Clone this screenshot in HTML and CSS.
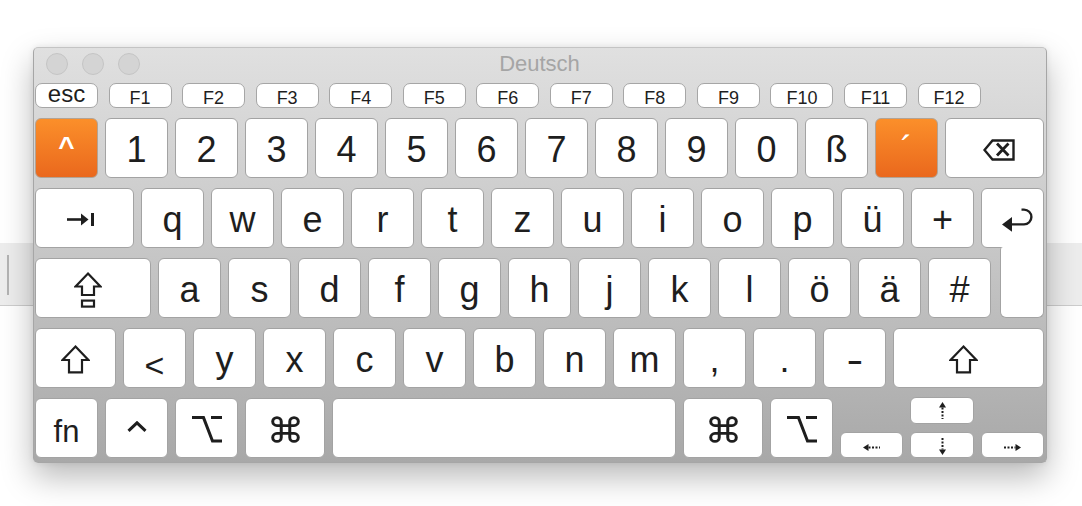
FILE: index.html
```html
<!DOCTYPE html>
<html>
  <head>
    <title>Tastaturübersicht</title>
    <meta charset="UTF-8">
    <link rel="stylesheet" href="styles.css">
  </head>
  <body>
    <!-- Textfeld hinter dem Fenster -->
    <div class="field"><span class="caret"></span></div>

    <div class="viewer">
      <div class="titlebar">
        <div class="lights">
          <span class="light"></span>
          <span class="light"></span>
          <span class="light"></span>
        </div>
        <div class="title">Deutsch</div>
        <div></div>
      </div>

      <div class="frow">
        <div class="fkey esc">esc</div>
        <div class="fkey">F1</div>
        <div class="fkey">F2</div>
        <div class="fkey">F3</div>
        <div class="fkey">F4</div>
        <div class="fkey">F5</div>
        <div class="fkey">F6</div>
        <div class="fkey">F7</div>
        <div class="fkey">F8</div>
        <div class="fkey">F9</div>
        <div class="fkey">F10</div>
        <div class="fkey">F11</div>
        <div class="fkey">F12</div>
      </div>

      <div class="rows">
        <div class="row">
          <div class="key dead hat">^</div>
          <div class="key">1</div>
          <div class="key">2</div>
          <div class="key">3</div>
          <div class="key">4</div>
          <div class="key">5</div>
          <div class="key">6</div>
          <div class="key">7</div>
          <div class="key">8</div>
          <div class="key">9</div>
          <div class="key">0</div>
          <div class="key">ß</div>
          <div class="key dead">´</div>
          <div class="key back">
            <svg class="ico nudge-r" width="32" height="22" viewBox="0 0 32 22">
              <path d="M9.5 1.5H30.5V20.5H9.5L1.5 11Z" fill="none" stroke="#1e1e1e" stroke-width="2.4"/>
              <path d="M14 4.5L25.5 16.5M25.5 4.5L14 16.5" stroke="#1e1e1e" stroke-width="2.8"/>
            </svg>
          </div>
        </div>

        <div class="row">
          <div class="key tab">
            <svg class="ico nudge-l" width="29" height="13" viewBox="0 0 29 13">
              <path d="M0 6.5H16" stroke="#1e1e1e" stroke-width="2.6"/>
              <path d="M14 0.5L21.5 6.5L14 12.5Z" fill="#1e1e1e"/>
              <path d="M25.5 0V13" stroke="#1e1e1e" stroke-width="3"/>
            </svg>
          </div>
          <div class="key">q</div>
          <div class="key">w</div>
          <div class="key">e</div>
          <div class="key">r</div>
          <div class="key">t</div>
          <div class="key">z</div>
          <div class="key">u</div>
          <div class="key">i</div>
          <div class="key">o</div>
          <div class="key">p</div>
          <div class="key">ü</div>
          <div class="key">+</div>
          <div class="key ret">
            <svg class="ico nudge-r" width="31" height="24" viewBox="0 0 31 24">
              <path d="M19.5 1.6H22A7.4 7.4 0 0 1 22 16.4H8" fill="none" stroke="#1e1e1e" stroke-width="2.4"/>
              <path d="M0 16.4L10 9V23.8Z" fill="#1e1e1e"/>
            </svg>
          </div>
        </div>

        <div class="row">
          <div class="key caps">
            <svg class="ico nudge-l2" width="28" height="36" viewBox="0 0 28 36">
              <path d="M14 1.6L26.4 14.5H20V23H8V14.5H1.6Z" fill="none" stroke="#1e1e1e" stroke-width="2.2" stroke-linejoin="miter"/>
              <rect x="8" y="28.6" width="12" height="6" fill="none" stroke="#1e1e1e" stroke-width="2.2"/>
            </svg>
          </div>
          <div class="key">a</div>
          <div class="key">s</div>
          <div class="key">d</div>
          <div class="key">f</div>
          <div class="key">g</div>
          <div class="key">h</div>
          <div class="key">j</div>
          <div class="key">k</div>
          <div class="key">l</div>
          <div class="key">ö</div>
          <div class="key">ä</div>
          <div class="key">#</div>
          <div class="key ret-low"></div>
        </div>

        <div class="row">
          <div class="key lshift">
            <svg class="ico" width="29" height="29" viewBox="0 0 29 29">
              <path d="M14.5 1.6L27.4 15H21V27.4H8V15H1.6Z" fill="none" stroke="#1e1e1e" stroke-width="2.2"/>
            </svg>
          </div>
          <div class="key"><span class="low">&lt;</span></div>
          <div class="key">y</div>
          <div class="key">x</div>
          <div class="key">c</div>
          <div class="key">v</div>
          <div class="key">b</div>
          <div class="key">n</div>
          <div class="key">m</div>
          <div class="key">,</div>
          <div class="key">.</div>
          <div class="key"><span class="wide">-</span></div>
          <div class="key rshift">
            <svg class="ico nudge-l2" width="29" height="29" viewBox="0 0 29 29">
              <path d="M14.5 1.6L27.4 15H21V27.4H8V15H1.6Z" fill="none" stroke="#1e1e1e" stroke-width="2.2"/>
            </svg>
          </div>
        </div>

        <div class="row">
          <div class="key fn">fn</div>
          <div class="key">
            <svg class="ico lift" width="20" height="11" viewBox="0 0 20 11">
              <path d="M1.5 9.8L10 1.8L18.5 9.8" fill="none" stroke="#1e1e1e" stroke-width="3"/>
            </svg>
          </div>
          <div class="key">
            <svg class="ico" width="30" height="27" viewBox="0 0 30 27">
              <path d="M0 1.6H11.5L20.5 25H30M19 1.6H30" fill="none" stroke="#1e1e1e" stroke-width="3"/>
            </svg>
          </div>
          <div class="key cmd">
            <svg class="ico" width="29" height="27" viewBox="1.8 1.8 20.4 20.4" preserveAspectRatio="none">
              <path d="M18 3a3 3 0 0 0-3 3v12a3 3 0 0 0 3 3 3 3 0 0 0 3-3 3 3 0 0 0-3-3H6a3 3 0 0 0-3 3 3 3 0 0 0 3 3 3 3 0 0 0 3-3V6a3 3 0 0 0-3-3 3 3 0 0 0-3 3 3 3 0 0 0 3 3h12a3 3 0 0 0 3-3 3 3 0 0 0-3-3z" fill="none" stroke="#1e1e1e" stroke-width="2.1"/>
            </svg>
          </div>
          <div class="key space"></div>
          <div class="key cmd">
            <svg class="ico" width="29" height="27" viewBox="1.8 1.8 20.4 20.4" preserveAspectRatio="none">
              <path d="M18 3a3 3 0 0 0-3 3v12a3 3 0 0 0 3 3 3 3 0 0 0 3-3 3 3 0 0 0-3-3H6a3 3 0 0 0-3 3 3 3 0 0 0 3 3 3 3 0 0 0 3-3V6a3 3 0 0 0-3-3 3 3 0 0 0-3 3 3 3 0 0 0 3 3h12a3 3 0 0 0 3-3 3 3 0 0 0-3-3z" fill="none" stroke="#1e1e1e" stroke-width="2.1"/>
            </svg>
          </div>
          <div class="key">
            <svg class="ico" width="30" height="27" viewBox="0 0 30 27">
              <path d="M0 1.6H11.5L20.5 25H30M19 1.6H30" fill="none" stroke="#1e1e1e" stroke-width="3"/>
            </svg>
          </div>
          <div class="arrows">
            <div class="akey up">
              <svg width="7" height="17" viewBox="0 0 7 17">
                <path d="M3.5 0L7 5.5H0Z" fill="#1e1e1e"/>
                <path d="M3.5 5.5V17" stroke="#1e1e1e" stroke-width="2" stroke-dasharray="2 1.5"/>
              </svg>
            </div>
            <div class="akey left">
              <svg width="17" height="7" viewBox="0 0 17 7">
                <path d="M0 3.5L5.5 0V7Z" fill="#1e1e1e"/>
                <path d="M5.5 3.5H17" stroke="#1e1e1e" stroke-width="2" stroke-dasharray="2 1.5"/>
              </svg>
            </div>
            <div class="akey down">
              <svg width="7" height="17" viewBox="0 0 7 17">
                <path d="M3.5 0V11.5" stroke="#1e1e1e" stroke-width="2" stroke-dasharray="2 1.5"/>
                <path d="M3.5 17L7 11.5H0Z" fill="#1e1e1e"/>
              </svg>
            </div>
            <div class="akey right">
              <svg width="17" height="7" viewBox="0 0 17 7">
                <path d="M0 3.5H11.5" stroke="#1e1e1e" stroke-width="2" stroke-dasharray="2 1.5"/>
                <path d="M17 3.5L11.5 0V7Z" fill="#1e1e1e"/>
              </svg>
            </div>
          </div>
        </div>
      </div>
    </div>
  </body>
</html>
```

FILE: styles.css
```css
body
{
  margin: 0;
  background: #ffffff;
  font-family: "Liberation Sans", Arial, sans-serif;
  color: #1e1e1e;
}

/* Textfeld im Hintergrund */
.field
{
  margin-top: 243px;
  height: 63px;
  box-sizing: border-box;
  padding: 12px 0 0 7px;
  background: #ededed;
  border-bottom: 1px solid #cdcdcd;
}
.caret
{
  display: block;
  width: 2px;
  height: 40px;
  background: #b3b3b3;
}

/* Tastaturfenster, liegt über dem Textfeld */
.viewer
{
  position: absolute;
  left: 33px;
  top: 47px;
  width: 1014px;
  height: 416px;
  box-sizing: border-box;
  padding: 0 2px 0 1px;
  border: 1px solid #a6a6a6;
  border-top-color: #c4c4c4;
  border-radius: 5px;
  background: linear-gradient(#e0e0e0, #c6c6c6 50%, #a8a8a8);
  box-shadow: 0 14px 32px rgba(0, 0, 0, 0.28), 0 0 6px rgba(0, 0, 0, 0.08);
}

.titlebar
{
  height: 32px;
  display: grid;
  grid-template-columns: 1fr auto 1fr;
  align-items: center;
}
.lights
{
  display: flex;
  gap: 14px;
  padding-left: 11px;
}
.light
{
  width: 20px;
  height: 20px;
  border-radius: 50%;
  background: #d4d4d4;
  border: 1px solid #c5c5c5;
}
.title
{
  font-size: 22px;
  color: #a5a5a5;
}

/* Funktionstasten */
.frow
{
  display: flex;
  gap: 10.55px;
  margin-top: 3px;
  height: 25px;
}
.fkey
{
  width: 63px;
  height: 25px;
  box-sizing: border-box;
  padding-top: 5px;
  display: flex;
  align-items: center;
  justify-content: center;
  background: #ffffff;
  border: 1px solid #a6a6a6;
  border-radius: 7px;
  font-size: 18px;
}
.esc
{
  font-size: 24px;
  padding-top: 0;
  padding-bottom: 3px;
}

/* Haupttasten */
.rows
{
  display: flex;
  flex-direction: column;
  gap: 10px;
  margin-top: 10px;
}
.row
{
  display: flex;
  gap: 7px;
  height: 60px;
}
.key
{
  width: 63px;
  height: 60px;
  flex-shrink: 0;
  box-sizing: border-box;
  padding-top: 3px;
  display: flex;
  align-items: center;
  justify-content: center;
  background: #ffffff;
  border: 1px solid #a3a3a3;
  border-radius: 6px;
  font-size: 36px;
}
.dead
{
  background: linear-gradient(#fb8f2a, #ea681d);
  border-color: #b3a394;
  color: #ffffff;
}
.hat
{
  font-size: 28px;
  font-weight: bold;
  padding-top: 0;
  padding-bottom: 3px;
}
.low  { position: relative; top: 6px; font-size: 34px; }
.wide { display: inline-block; transform: scaleX(1.4); }

.back   { width: 99px; }
.tab    { width: 99px; }
.caps   { width: 116px; }
.lshift { width: 81px; }
.rshift { flex: 1; }
.cmd    { width: 80px; }
.space  { flex: 1; }
.fn
{
  font-size: 31px;
  padding-top: 7px;
}

/* Eingabetaste über zwei Reihen */
.ret
{
  border-bottom-right-radius: 0;
}
.ret-low
{
  position: relative;
  z-index: 1;
  width: 44px;
  height: 71px;
  margin-top: -11px;
  margin-left: auto;
  border-top: none;
  border-top-right-radius: 0;
  border-top-left-radius: 3px;
}

.ico       { display: block; }
.nudge-r   { margin-left: 9px; }
.nudge-l   { margin-right: 6px; }
.nudge-l2  { margin-right: 10px; }
.lift      { margin-bottom: 6px; }

/* Pfeiltasten */
.arrows
{
  width: 204px;
  display: grid;
  grid-template-columns: 63px 64px 63px;
  grid-template-rows: 26px 26px;
  column-gap: 7px;
  row-gap: 8px;
}
.akey
{
  display: flex;
  align-items: center;
  justify-content: center;
  background: #ffffff;
  border: 1px solid #a3a3a3;
  border-radius: 6px;
}
.up    { grid-column: 2; grid-row: 1; margin-top: -1px; }
.left  { grid-column: 1; grid-row: 2; padding-top: 4px; }
.down  { grid-column: 2; grid-row: 2; padding-top: 2px; }
.right { grid-column: 3; grid-row: 2; padding-top: 4px; }
```
